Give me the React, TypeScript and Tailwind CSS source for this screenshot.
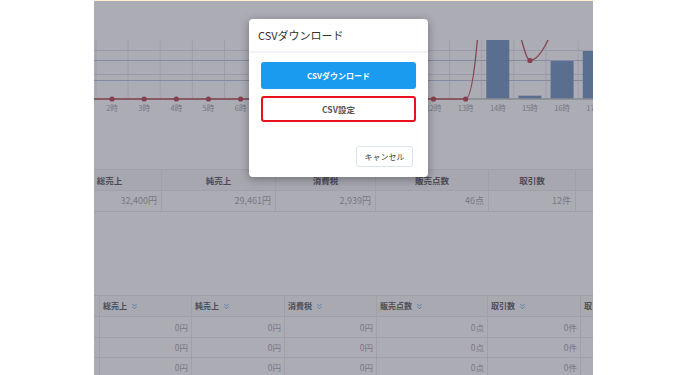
import { ChevronsDown } from "lucide-react";

const font = { fontFamily: '"Noto Sans CJK JP", "Noto Sans", sans-serif' };

// local x of hour h on the chart (chart is scrolled, 2時 sits at 18px)
const hx = (h: number) => 18 + 32.15 * (h - 2);

const hours = Array.from({ length: 16 }, (_, i) => i + 2); // 2..17

const bars: { h: number; top: number }[] = [
  { h: 14, top: 39 },
  { h: 15, top: 94.7 },
  { h: 16, top: 60 },
  { h: 17, top: 50 },
];

function HourlyChart() {
  return (
    <svg width="499" height="120" className="block">
      <defs>
        <clipPath id="plot">
          <rect x="0" y="39" width="499" height="62" />
        </clipPath>
      </defs>
      {/* vertical grid */}
      {Array.from({ length: 16 }, (_, i) => i + 1).map((h) => (
        <line key={h} x1={hx(h) + 16.07} x2={hx(h) + 16.07} y1="39" y2="98" stroke="#e9e9ee" strokeWidth="1" />
      ))}
      {/* horizontal guides */}
      <line x1="0" x2="499" y1="49.5" y2="49.5" stroke="#dfe4f3" />
      <line x1="0" x2="499" y1="59.5" y2="59.5" stroke="#c2c8dd" />
      <line x1="0" x2="499" y1="73.5" y2="73.5" stroke="#dfe4f3" />
      <line x1="0" x2="499" y1="79.5" y2="79.5" stroke="#c2c8dd" />
      {/* bars */}
      {bars.map((b) => (
        <rect key={b.h} x={hx(b.h) - 11.5} y={b.top} width="23" height={98 - b.top} fill="#7b9dc3" />
      ))}
      {/* axis */}
      <line x1="0" x2="499" y1="98" y2="98" stroke="#c4c4c4" strokeWidth="1.5" />
      {/* sales line */}
      <g clipPath="url(#plot)" fill="none" stroke="#c25a60" strokeWidth="1.3">
        <line x1="0" x2={hx(13)} y1="98" y2="98" strokeWidth="1.6" />
        <path d={`M ${hx(13)} 98 C ${hx(13) + 5} 98, ${hx(13) + 9} 70, ${hx(13) + 12} 36`} />
        <path d="M 427 37 C 430 48, 433 59.5, 436 59.5 C 441 59.5, 448 52, 455 37" />
      </g>
      {hours
        .filter((h) => h <= 13)
        .map((h) => (
          <circle key={h} cx={hx(h)} cy="98" r="2.6" fill="#c04f5a" />
        ))}
      <circle cx={hx(15)} cy="59.5" r="2.6" fill="#c04f5a" />
      {/* labels */}
      {hours.map((h) => (
        <text key={h} x={hx(h)} y="110" textAnchor="middle" fontSize="7.5" fill="#a9a9ad" style={font}>
          {h}時
        </text>
      ))}
    </svg>
  );
}

const summaryCols = [
  { label: "総売上", w: "w-[104px]", value: "32,400円" },
  { label: "純売上", w: "w-[114px]", value: "29,461円" },
  { label: "消費税", w: "w-[100px]", value: "2,939円" },
  { label: "販売点数", w: "w-[113px]", value: "46点" },
  { label: "取引数", w: "w-[87px]", value: "12件" },
  { label: "", w: "w-[60px]", value: "" },
];

const detailCols = [
  { label: "", w: "w-[6px]", value: "", sort: false },
  { label: "総売上", w: "w-[92px]", value: "0円", sort: true },
  { label: "純売上", w: "w-[93px]", value: "0円", sort: true },
  { label: "消費税", w: "w-[92px]", value: "0円", sort: true },
  { label: "販売点数", w: "w-[111px]", value: "0点", sort: true },
  { label: "取引数", w: "w-[93px]", value: "0件", sort: true },
  { label: "取", w: "w-[40px]", value: "", sort: false },
];

function SummaryTable() {
  return (
    <div className="overflow-hidden">
      <div className="flex -ml-[36px] w-max">
        {summaryCols.map((c, i) => (
          <div key={i} className={`${c.w} shrink-0 border-r border-[#ececec]`}>
            <div className="h-[22px] flex items-center justify-center bg-[#f7f7f7] border-y border-[#ececec] text-[8.5px] font-bold text-[#666]">
              {c.label}
            </div>
            <div className="h-[21px] flex items-center justify-end pr-[4px] border-b border-[#ececec] text-[9px] text-[#adadad]">
              {c.value}
            </div>
          </div>
        ))}
      </div>
    </div>
  );
}

function DetailTable() {
  const rowHeights = ["h-[21px]", "h-[20px]", "h-[20px]"];
  return (
    <div className="flex overflow-hidden">
      {detailCols.map((c, i) => (
        <div key={i} className={`${c.w} shrink-0 border-r border-[#ececec]`}>
          <div className="h-[22px] flex items-center pl-[3px] border-y border-[#ececec] bg-[#fafafa] text-[8px] font-bold text-[#666] whitespace-nowrap">
            {c.label}
            {c.sort && <ChevronsDown className="ml-[3px] w-[9px] h-[9px] text-[#6fb2f0]" strokeWidth={2.4} />}
          </div>
          {rowHeights.map((rh, r) => (
            <div key={r} className={`${rh} flex items-center justify-end pr-[3px] border-b border-[#ececec] text-[8.5px] text-[#adadad]`}>
              {c.value}
            </div>
          ))}
        </div>
      ))}
    </div>
  );
}

function CsvModal() {
  return (
    <div className="absolute left-[155px] top-[18px] w-[179px] h-[158px] bg-white rounded-[4px] shadow-[0_2px_10px_rgba(0,0,0,0.35)] flex flex-col" style={font}>
      <div className="h-[34px] flex items-center px-[9px] border-b-2 border-[#f1f3f6] text-[11px] text-[#333]">
        CSVダウンロード
      </div>
      <div className="px-[12px] pt-[9px] flex flex-col gap-[7px]">
        <button className="h-[27px] rounded-[3px] bg-[#1b9bf0] text-white text-[8px] font-bold">
          CSVダウンロード
        </button>
        <button className="h-[26px] rounded-[3px] border-2 border-[#e8101c] bg-white text-[#555] text-[8.5px] font-bold">
          CSV設定
        </button>
      </div>
      <div className="flex justify-end pr-[15px] mt-[24px]">
        <button className="w-[57px] h-[21px] rounded-[3px] border border-[#dce4ee] bg-white text-[8px] text-[#444]">
          キャンセル
        </button>
      </div>
    </div>
  );
}

export default function App() {
  return (
    <div className="w-[688px] h-[375px] bg-white overflow-hidden" style={font}>
      <div className="relative ml-[94px] w-[499px] h-[375px] overflow-hidden bg-white border-t border-[#fff1d2]">
        <HourlyChart />
        <div className="mt-[48px]">
          <SummaryTable />
        </div>
        <div className="mt-[83px]">
          <DetailTable />
        </div>
        {/* backdrop */}
        <div className="absolute inset-0 bg-[rgba(38,36,60,0.38)]" />
        <CsvModal />
      </div>
    </div>
  );
}
